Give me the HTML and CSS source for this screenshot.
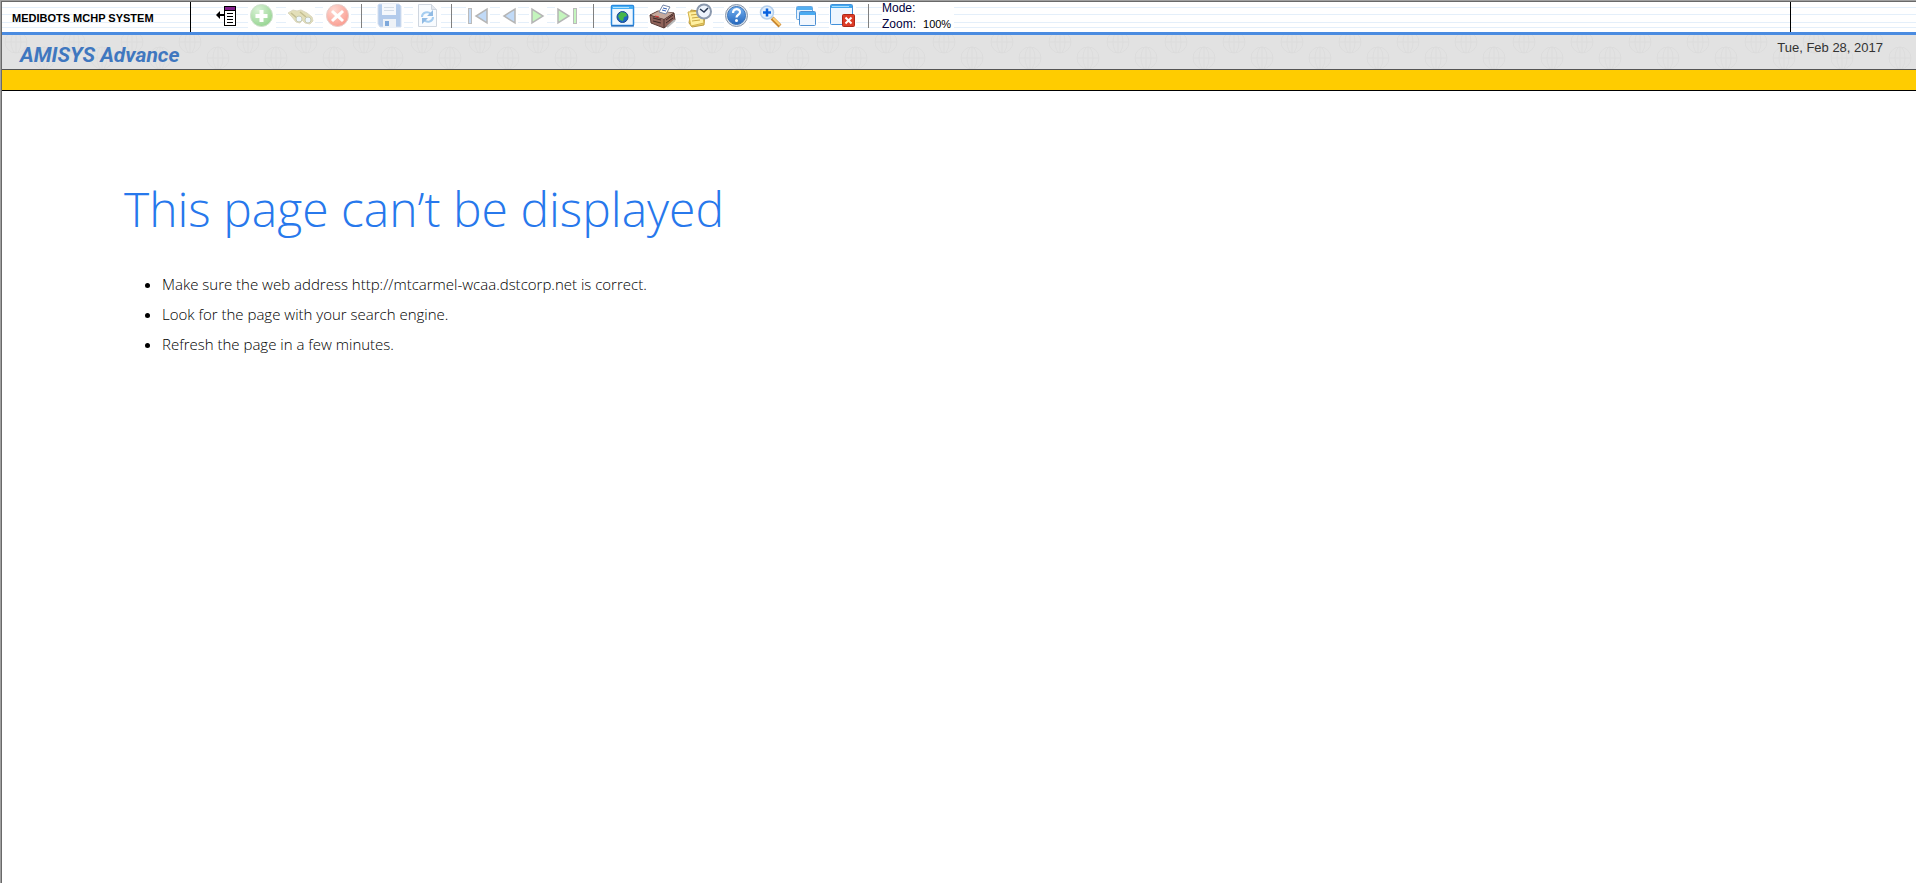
FILE: index.html
```html
<!DOCTYPE html>
<html lang="en">
<head>
<meta charset="utf-8">
<title>AMISYS Advance</title>
<link rel="stylesheet" href="styles.css">
</head>
<body>
<div class="window">
  <div class="toolbar">
    <div class="system-name">MEDIBOTS MCHP SYSTEM</div>
    <div class="tools">
      <div class="group group-edit">
        <button type="button" aria-label="Menu"><svg viewBox="0 0 38 30">
          <rect x="18" y="4" width="12" height="20" fill="#000"/><rect x="19" y="5" width="10" height="3" fill="#84208c"/><rect x="19" y="9" width="10" height="14" fill="#fff"/>
          <path d="M21 11.500h6M21 14.500h6M21 17.500h6M21 20.500h6" stroke="#000"/><path d="M10 13l4-4v3h5v2h-5v3z" fill="#000"/></svg></button>
        <button type="button" aria-label="Add" disabled><svg viewBox="0 0 38 30">
          <defs><radialGradient id="gr" cx=".35" cy=".25" r=".8"><stop offset="0" stop-color="#d9f2d6"/><stop offset="1" stop-color="#96d491"/></radialGradient></defs>
          <rect x="4" y="2" width="28" height="24" fill="#fff"/><circle cx="17.500" cy="13.500" r="11" fill="url(#gr)" stroke="#cfe0cd"/><path d="M15.500 8h4v4h4v4h-4v4h-4v-4h-4v-4h4z" fill="#fff"/></svg></button>
        <button type="button" aria-label="Search" disabled><svg viewBox="0 0 38 30">
          <rect x="4" y="3" width="29" height="21" fill="#fff"/><path d="M6 11l5-3 4 1 4-1 6 3 5 4 1 4-3 3-5-1-3-3-2 3-4-1-4-5z" fill="#e3dfb9" stroke="#dcd8c0"/><path d="M9 11l6 5M18 10l6 5" stroke="#c4bf92" stroke-width="1.500"/><circle cx="17" cy="17" r="3" fill="#edf7ff" stroke="#c6cab4"/><circle cx="26" cy="18" r="3" fill="#edf7ff" stroke="#c6cab4"/></svg></button>
        <button type="button" aria-label="Delete" disabled><svg viewBox="0 0 38 30">
          <defs><radialGradient id="rd" cx=".35" cy=".25" r=".8"><stop offset="0" stop-color="#ffd9d2"/><stop offset="1" stop-color="#fa9c90"/></radialGradient></defs>
          <rect x="3" y="2" width="28" height="24" fill="#fff"/><circle cx="17.500" cy="13.500" r="11" fill="url(#rd)" stroke="#e6cfcc"/><path d="M13 8l4.500 4L22 8l2 2-4 4 4 4-2 2-4.500-4-4.500 4-2-2 4-4-4-4z" fill="#fff"/></svg></button>
      </div>
      <div class="group group-save">
        <button type="button" aria-label="Save" disabled><svg viewBox="0 0 38 30">
          <rect x="5" y="2" width="28" height="25" fill="#fff"/><path d="M8 2h20l2 2v21H9l-2-3V3z" fill="#b3cbeb" stroke="#d4dfef"/><rect x="11" y="2" width="14" height="11" fill="#f5f8fc"/><path d="M13 5.500h10M13 8.500h10" stroke="#d4dde8"/><rect x="12" y="17" width="13" height="8" fill="#eef2f7"/><rect x="14" y="19" width="4" height="5" fill="#7ea8db"/></svg></button>
        <button type="button" aria-label="Refresh" disabled><svg viewBox="0 0 38 30">
          <rect x="4" y="2" width="28" height="25" fill="#fff"/><path d="M9.500 2.500h13l5 5v17h-18z" fill="#f8fbfe" stroke="#cfd6df"/><path d="M22.500 2.500v5h5" fill="#e3e8ef" stroke="#cfd6df"/><path d="M13 15c0-5 6-6 9-3M24 15c0 5-6 6-9 3" fill="none" stroke="#a5cdf0" stroke-width="2"/><path d="M24 8v6h-6zM13 22v-6h6z" fill="#91bbe4"/></svg></button>
      </div>
      <div class="group group-nav">
        <button type="button" aria-label="First" disabled><svg viewBox="0 0 30 30"><rect x="3" y="4" width="24" height="20" fill="#fff"/><rect x="5.500" y="6.500" width="3" height="15" fill="#c1daf7" stroke="#bbb"/><path d="M24 7v14l-11-7z" fill="#c1daf7" stroke="#b5b5b5" stroke-width="1.500"/></svg></button>
        <button type="button" aria-label="Previous" disabled><svg viewBox="0 0 30 30"><rect x="7" y="4" width="18" height="20" fill="#fff"/><path d="M22 7v14l-11-7z" fill="#c1daf7" stroke="#b5b5b5" stroke-width="1.500"/></svg></button>
        <button type="button" aria-label="Next" disabled><svg viewBox="0 0 30 30"><rect x="6" y="4" width="18" height="20" fill="#fff"/><path d="M9 7v14l11-7z" fill="#c4f5bd" stroke="#b5b5b5" stroke-width="1.500"/></svg></button>
        <button type="button" aria-label="Last" disabled><svg viewBox="0 0 30 30"><rect x="2" y="4" width="24" height="20" fill="#fff"/><path d="M5 7v14l11-7z" fill="#c4f5bd" stroke="#b5b5b5" stroke-width="1.500"/><rect x="20.500" y="6.500" width="3" height="15" fill="#c4f5bd" stroke="#bbb"/></svg></button>
      </div>
      <div class="group group-view">
        <button type="button" aria-label="Browser"><svg viewBox="0 0 37 30">
          <rect x="6.500" y="3.500" width="22" height="20" rx="1" fill="#f0f7ff" stroke="#2b8ae0" stroke-width="1.500"/><rect x="7" y="4" width="21" height="3" fill="#46b0f5"/><path d="M8 5.500h16" stroke="#b3e2ff"/><path d="M6 24h23" stroke="#1f5fae"/><circle cx="17.500" cy="15" r="5.500" fill="#1f66c4" stroke="#184b8c"/><path d="M13 14l3-4 5 1 1 3-3 1-1 4-3-1z" fill="#47b649"/></svg></button>
        <button type="button" aria-label="Print"><svg viewBox="0 0 37 30">
          <rect x="6" y="2" width="28" height="24" fill="#fff"/><path d="M8 13l8-4 16 2 1 7-11 8L9 21z" fill="#8f6259" stroke="#5b3e39"/><path d="M8 13l14 4 10-6M22 17v9" stroke="#49302e" fill="none"/><path d="M9 13l13 4 9-6-14-2z" fill="#c5a99d"/><path d="M17 10l4-7 7 2-4 7z" fill="#fff" stroke="#7586a5"/><path d="M21 6l4 1M20 8l4 1" stroke="#3561b6"/><path d="M11 16l8 2M11 19l8 2M24 18l7-5M24 21l7-5" stroke="#3e2a29"/><path d="M13 14l4 1" stroke="#d33"/><path d="M25 25l8-7" stroke="#b7b7b7" stroke-width="2"/></svg></button>
        <button type="button" aria-label="History"><svg viewBox="0 0 37 30">
          <rect x="7" y="2" width="27" height="24" fill="#fff"/><path d="M12 8l14 2-1 13-12 2-3-4z" fill="#edcf68" stroke="#b9993f"/><path d="M9 10l14-1 2 12-13 3z" fill="#fff0a0" stroke="#d1b14b"/><path d="M12 13l8-1M13 16l8-1M13 19l8-1" stroke="#c9a740"/><circle cx="25" cy="9.500" r="7" fill="#edf4fd" stroke="#8b99ae" stroke-width="2"/><path d="M21 7l4 3 4-4" fill="none" stroke="#26354f" stroke-width="1.500"/></svg></button>
        <button type="button" aria-label="Help"><svg viewBox="0 0 37 30">
          <defs><linearGradient id="bl" x2="0" y2="1"><stop offset="0" stop-color="#76b2f2"/><stop offset="1" stop-color="#2567bd"/></linearGradient></defs>
          <rect x="8" y="2" width="25" height="24" fill="#fff"/><circle cx="20.500" cy="13.500" r="11" fill="#d8e0eb" stroke="#8896a9"/><circle cx="20.500" cy="13.500" r="9" fill="url(#bl)" stroke="#3975bb"/><path d="M17 11c0-5 7-5 7-1 0 3-3.500 2.500-3.500 5.500" fill="none" stroke="#fff" stroke-width="2.200"/><circle cx="20.500" cy="18.500" r="1.500" fill="#fff"/></svg></button>
        <button type="button" aria-label="Zoom in"><svg viewBox="0 0 37 30">
          <path d="M19 16l8 8" stroke="#c7852f" stroke-width="4"/><path d="M20 16l7 7" stroke="#ffd175" stroke-width="2"/><circle cx="14" cy="10.500" r="6.500" fill="#e1effc" stroke="#b4cfec" stroke-width="1.500"/><path d="M10 10.500h8M14 6.500v8" stroke="#0962df" stroke-width="2.500"/></svg></button>
        <button type="button" aria-label="Windows"><svg viewBox="0 0 37 30">
          <rect x="5" y="3" width="23" height="22" fill="#fff"/><rect x="6.500" y="4.500" width="16" height="13" rx="1" fill="#e5f1fd" stroke="#6aa9e2"/><rect x="7" y="5" width="15" height="3" fill="#55b0f2"/><rect x="9.500" y="9.500" width="16" height="14" rx="1" fill="#f1f7fe" stroke="#4c8fd2"/><rect x="10" y="10" width="15" height="3" fill="#4aabf1"/></svg></button>
        <button type="button" aria-label="Close window"><svg viewBox="0 0 37 30">
          <rect x="2" y="2" width="27" height="24" fill="#fff"/><rect x="3.500" y="2.500" width="22" height="20" rx="1" fill="#edf5fe" stroke="#4190da"/><rect x="4" y="3" width="21" height="3" fill="#41a8ee"/><path d="M5 4.500h17" stroke="#a8ddff"/><rect x="15.500" y="12.500" width="12" height="12" rx="1" fill="#dc3b26" stroke="#ac281a"/><path d="M18.500 15.500l6 6M24.500 15.500l-6 6" stroke="#fff" stroke-width="2"/></svg></button>
      </div>
      <dl class="status">
        <div><dt>Mode:</dt><dd></dd></div>
        <div><dt>Zoom:</dt><dd>100%</dd></div>
      </dl>
    </div>
    <div class="toolbar-end"></div>
  </div>
  <header class="banner">
    <svg class="texture" aria-hidden="true">
      <defs><pattern id="globes" width="58" height="34" patternUnits="userSpaceOnUse">
        <g fill="none" stroke="#dcdcdc"><circle cx="14" cy="7" r="11"/><ellipse cx="14" cy="7" rx="5" ry="11"/><path d="M3 7h22M14-4v22"/><circle cx="42" cy="23" r="11"/><ellipse cx="42" cy="23" rx="5" ry="11"/><path d="M31 23h22M42 12v22"/></g>
      </pattern></defs>
      <rect width="100%" height="100%" fill="url(#globes)"/>
    </svg>
    <div class="brand">AMISYS Advance</div>
    <time class="date" datetime="2017-02-28">Tue, Feb 28, 2017</time>
  </header>
  <div class="menu-strip"></div>
  <main class="message">
    <h1>This page can’t be displayed</h1>
    <ul>
      <li>Make sure the web address http://mtcarmel-wcaa.dstcorp.net is correct.</li>
      <li>Look for the page with your search engine.</li>
      <li>Refresh the page in a few minutes.</li>
    </ul>
  </main>
</div>
</body>
</html>
```
FILE: styles.css
```css
* { box-sizing: border-box; }
body { margin: 0; background: #fff; font-family: "Liberation Sans", Arial, sans-serif; color: #000; }
.window { min-height: 100vh; border-top: 1px solid #a0a0a0; border-left: 1px solid #a0a0a0; box-shadow: inset 1px 1px #696969; padding: 1px 0 0 1px; }
.toolbar {
  display: flex; height: 33px; border-bottom: 3px solid #4a8be0;
  background: linear-gradient(#fff 5px, #e4effa 5px 6px, #fff 6px 12px, #e4effa 12px 13px, #fff 13px 20px, #e4effa 20px 21px, #fff 21px 25px, #e4effa 25px 26px, #fff 26px);
}
.system-name { width: 189px; padding: 9px 0 0 10px; border-right: 1px solid #000; font-size: 11px; line-height: 14px; font-weight: bold; white-space: nowrap; }
.tools { display: flex; flex: 1; }
.group { position: relative; display: flex; padding: 0 10px; }
.group::after { content: ""; position: absolute; right: 0; top: 2px; width: 1px; height: 24px; background: #808080; }
.group button { width: 38px; height: 30px; padding: 0; border: 0; background: none; }
.group svg { display: block; width: 100%; height: 30px; }
.group-edit { padding: 0 4px 0 15px; }
.group-save { padding: 0 5px 0 9px; }
.group-nav { padding: 0 11px 0 11px; }
.group-nav button { width: 30px; }
.group-view { padding: 0 5px 0 11px; }
.group-view button { width: 37px; }
.status { margin: 0; padding-left: 13px; color: #00003c; font-size: 12px; line-height: 16px; }
.status div { display: flex; gap: 7px; background: #fff; width: 72px; }
.status div:first-child { height: 14px; line-height: 12px; }
.status dd { margin: 0; font-size: 11px; color: #000; }
.toolbar-end { width: 126px; border-left: 1px solid #000; }
.banner { position: relative; display: flex; justify-content: space-between; height: 34px; padding: 0 33px 0 18px; background: #e2e2e2; }
.texture { position: absolute; inset: 0; width: 100%; height: 100%; }
.brand { position: relative; padding-top: 6px; font: italic bold 21px/28px Roboto, "Liberation Sans", Arial, sans-serif; color: #3f77bf; }
.date { position: relative; padding-top: 5px; font-size: 13px; line-height: 16px; color: #333; }
.menu-strip { height: 22px; border-top: 1px solid #555; border-bottom: 1px solid #000; background: #fc0; }
.message { padding: 84px 24px 0 122px; font-family: "Open Sans", "Noto Sans", sans-serif; font-weight: 300; }
.message h1 { margin: 0; font-size: 48px; line-height: 68px; font-weight: 300; color: #2778ec; }
.message ul { margin: 26px 0 0; padding-left: 38px; font-size: 15px; line-height: 30px; }
```
